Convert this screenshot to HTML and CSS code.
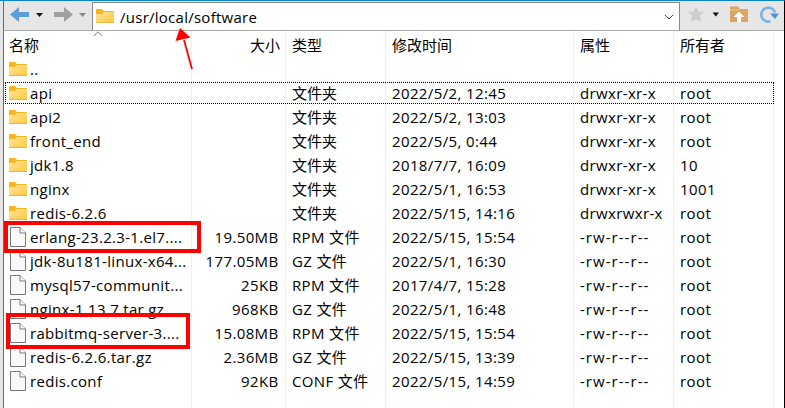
FILE: index.html
```
<!DOCTYPE html>
<html lang="zh-CN">
<head>
<meta charset="utf-8">
<title>/usr/local/software</title>
<link rel="stylesheet" href="styles.css">
</head>
<body>
<svg class="defs" width="0" height="0">
  <defs>
    <linearGradient id="fg" x1="0" y1="0" x2="1" y2="1"><stop offset="0" stop-color="#ffe59b"/><stop offset="1" stop-color="#fcc83c"/></linearGradient>
    <symbol id="folder" viewBox="0 0 18 15"><path d="M0 1Q0 0 1 0H6L8 2H17Q18 2 18 3V8H0Z" fill="#f4b51e"/><path d="M0 5H6L8 3H17Q18 3 18 4V13Q18 14 17 14H1Q0 14 0 13Z" fill="url(#fg)"/><path d="M0 13.5H18" stroke="#e9b449"/></symbol>
    <symbol id="file" viewBox="0 0 18 20"><path d="M1.5.5H11L16.500 6V19.500H1.500Z" fill="#fafafa" stroke="#777"/><path d="M11 .5V6H16.500" fill="#fff" stroke="#777"/></symbol>
  </defs>
</svg>
<div class="window">
  <header class="toolbar">
    <div class="nav">
      <svg width="86" height="28" viewBox="0 0 86 28">
        <path d="M6 12.500L15 5V10H25V15H15V20Z" fill="#5b9fd8"/>
        <path d="M32 11H39L35.500 15Z" fill="#111"/>
        <path d="M69 12.500L60 5V10H50V15H60V20Z" fill="#a0a0a0"/>
        <path d="M75 11H82L78.500 15Z" fill="#888"/>
      </svg>
    </div>
    <div class="address">
      <svg class="folder" width="18" height="15"><use href="#folder"/></svg>
      <span class="path">/usr/local/software</span>
      <svg class="chevron" width="10" height="6" viewBox="0 0 10 6"><path d="M.8.8L5 5L9.200.8" fill="none" stroke="#444"/></svg>
    </div>
    <div class="tools">
      <svg width="104" height="28" viewBox="0 0 104 28">
        <path d="M16 4L18.300 9.500L24 10L19.700 13.800L21 20L16 16.700L11 20L12.300 13.800L8 10L13.700 9.500Z" fill="#ccc"/>
        <path d="M32.500 10.500H39L35.800 14.500Z" fill="#111"/>
        <path d="M50 4.500H58L60 7H68V20H50Z" fill="#dda563"/><path d="M50 8H58L60 6" fill="none" stroke="#efc796"/>
        <path d="M59 9.500L64.500 15H61V20H57V15H53.500Z" fill="#fff"/>
        <path d="M90.500 19.300A7 7 0 1 1 95 10.500" fill="none" stroke="#7db3e2" stroke-width="2.600"/><path d="M90 11.500H99L95 17Z" fill="#4a96d8"/>
      </svg>
    </div>
  </header>
  <main class="list" id="list">
    <div class="row head"><span class="name cjk">名称</span><span class="size cjk">大小</span><span class="cjk">类型</span><span class="cjk">修改时间</span><span class="cjk">属性</span><span class="cjk">所有者</span></div>
  </main>
</div>
<svg class="sort" width="10" height="6" viewBox="0 0 10 6"><path d="M.8 5L5 .8L9.200 5" fill="none" stroke="#777"/></svg>
<div class="mark first"></div>
<div class="mark second"></div>
<svg class="pointer" width="20" height="46" viewBox="0 0 20 46"><path d="M17 43L9 14" stroke="#f00" stroke-width="1.800"/><path d="M5 2L15.500 11.500L.5 15Z" fill="#f00"/></svg>
<script src="list.js"></script>
</body>
</html>
```
FILE: styles.css
```
* { box-sizing: border-box; }
body {
  margin: 0;
  width: 785px;
  height: 408px;
  overflow: hidden;
  background: #e6e6e6;
  color: #000;
  font: 15px/24px "Open Sans", "Noto Sans CJK SC", sans-serif;
}
.defs { position: absolute; }
.window {
  width: 785px;
  height: 408px;
  padding-left: 3px;
  border-top: 1px solid #0b83d9;
  border-right: 1px solid #000;
}
.toolbar {
  display: flex;
  height: 30px;
  padding-top: 1px;
  background: #e6e6e6;
  border-left: 1px solid #0b83d9;
  border-bottom: 1px solid #aaa;
}
.nav { width: 88px; height: 28px; }
.nav svg { display: block; }
.address {
  width: 588px;
  height: 28px;
  display: flex;
  align-items: center;
  background: #fff;
  border: 1px solid #888;
  border-bottom: 0;
  padding: 0 5px 0 3px;
}
.path { margin-left: 6px; letter-spacing: .26px; }
.chevron { margin-left: auto; }
.tools { width: 104px; }
.list {
  height: 377px;
  padding-top: 1px;
  background: #fff;
  border-left: 1px solid #0b83d9;
  background-image: linear-gradient(#e8f0f8, #e8f0f8), linear-gradient(#e8f0f8, #e8f0f8), linear-gradient(#e8f0f8, #e8f0f8), linear-gradient(#e8f0f8, #e8f0f8), linear-gradient(#e8f0f8, #e8f0f8), linear-gradient(#e8f0f8, #e8f0f8);
  background-size: 1px 100%;
  background-position: 187px 0, 281px 0, 381px 0, 569px 0, 669px 0, 769px 0;
  background-repeat: no-repeat;
}
.row {
  display: grid;
  grid-template-columns: 188px 94px 100px 188px 100px 100px;
  width: 770px;
  height: 24px;
  align-items: center;
  position: relative;
}
.row > span { padding-left: 6px; white-space: pre; }
.row .name { padding-left: 5px; display: flex; align-items: center; }
.row .size { padding: 0 7.500px 0 0; text-align: right; }
.head { height: 25px; }
.row .label { margin-left: 3px; letter-spacing: .32px; }
.date { letter-spacing: .38px; }
.size { letter-spacing: .36px; }
.type { letter-spacing: .35px; }
.attr { letter-spacing: .36px; }
.attr.plain { letter-spacing: 1.040px; }
.owner { letter-spacing: .4px; }
.row .cjk { letter-spacing: 0; }
.row .type.cjk { letter-spacing: 0; }
.row .size.cjk { padding-right: 6px; }
.focus::after {
  content: "";
  position: absolute;
  inset: 1px 0 1px 1px;
  border: 1px dotted #000;
}
.sort { position: absolute; left: 93px; top: 31px; }
.mark { position: absolute; border: 4px solid #f00; }
.first { left: 4px; top: 221px; width: 197px; height: 32px; }
.second { left: 6px; top: 313px; width: 184px; height: 36px; }
.pointer { position: absolute; left: 175px; top: 26px; }
```
FILE: list.js
```
const D = 'drwxr-xr-x', F = '-rw-r--r--';
const rows = [
  ['..', '', '', '', '', ''],
  ['api', '', '文件夹', '2022/5/2, 12:45', D, 'root'],
  ['api2', '', '文件夹', '2022/5/2, 13:03', D, 'root'],
  ['front_end', '', '文件夹', '2022/5/5, 0:44', D, 'root'],
  ['jdk1.8', '', '文件夹', '2018/7/7, 16:09', D, '10'],
  ['nginx', '', '文件夹', '2022/5/1, 16:53', D, '1001'],
  ['redis-6.2.6', '', '文件夹', '2022/5/15, 14:16', 'drwxrwxr-x', 'root'],
  ['erlang-23.2.3-1.el7....', '19.50MB', 'RPM 文件', '2022/5/15, 15:54', F, 'root'],
  ['jdk-8u181-linux-x64...', '177.05MB', 'GZ 文件', '2022/5/1, 16:30', F, 'root'],
  ['mysql57-communit...', '25KB', 'RPM 文件', '2017/4/7, 15:28', F, 'root'],
  ['nginx-1.13.7.tar.gz', '968KB', 'GZ 文件', '2022/5/1, 16:48', F, 'root'],
  ['rabbitmq-server-3....', '15.08MB', 'RPM 文件', '2022/5/15, 15:54', F, 'root'],
  ['redis-6.2.6.tar.gz', '2.36MB', 'GZ 文件', '2022/5/15, 13:39', F, 'root'],
  ['redis.conf', '92KB', 'CONF 文件', '2022/5/15, 14:59', F, 'root'],
];
document.getElementById('list').insertAdjacentHTML('beforeend', rows.map((r, i) => {
  const icon = i < 7
    ? '<svg class="folder" width="18" height="15"><use href="#folder"/></svg>'
    : '<svg class="file" width="18" height="20"><use href="#file"/></svg>';
  return `<div class="row${i === 1 ? ' focus' : ''}"><span class="name">${icon}<span class="label">${r[0]}</span></span>` +
    `<span class="size">${r[1]}</span><span class="type${i < 7 ? ' cjk' : ''}">${r[2]}</span><span class="date">${r[3]}</span>` +
    `<span class="attr${i < 7 ? '' : ' plain'}">${r[4]}</span><span class="owner">${r[5]}</span></div>`;
}).join(''));
```
